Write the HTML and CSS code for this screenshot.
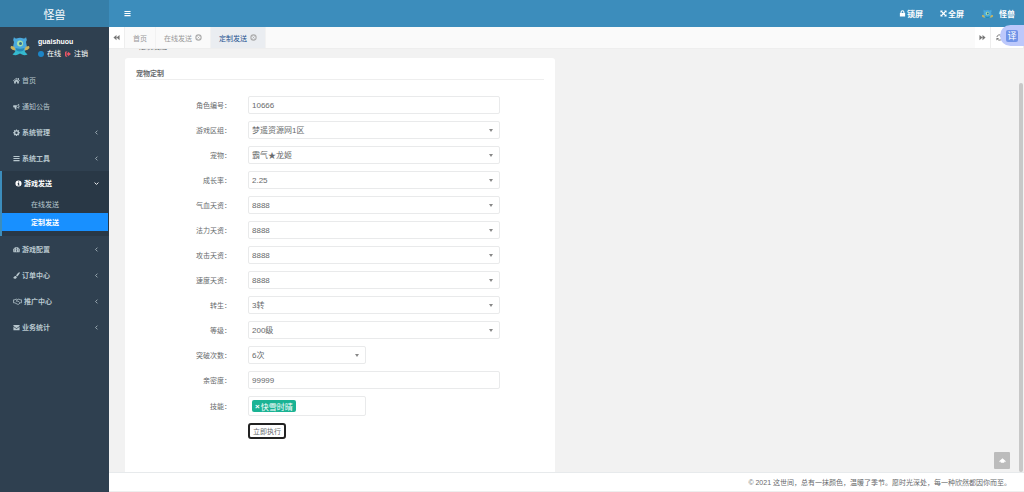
FILE: index.html
```html
<!DOCTYPE html>
<html lang="zh-CN">
<head>
    <meta charset="UTF-8">
    <meta name="viewport" content="width=device-width, initial-scale=1.0">
    <title>怪兽</title>
    <link rel="stylesheet" href="styles.css">
</head>
<body>

    <!-- Icons -->
    <svg class="sprite" aria-hidden="true">
        <symbol id="i-home" viewBox="0 0 16 16"><path d="M8 1.5 0 8.5l1 1.2L8 3.700l7 6 1-1.200-2.500-2.200V2h-2v2.500z"/><path d="M8 5 2.500 9.700V15H6.500v-4h3v4h4V9.700z"/></symbol>
        <symbol id="i-horn" viewBox="0 0 16 16"><path d="M1.500 5H7c3 0 5-2 7-3.500V6c1.500.3 1.500 2.700 0 3v4.500C12 12 10 10 7.500 9.900c-.6 1.800.2 3 1.200 4.100-1 1-3.200 1-4.200 0-.5-1.500-.9-2.600-.5-4H1.500C0 10 0 5 1.500 5zm7 1.300v2.400c1.500.3 2.800 1 4 1.900V4.400c-1.200.9-2.500 1.600-4 1.900z" fill-rule="evenodd"/></symbol>
        <symbol id="i-gear" viewBox="0 0 16 16"><path fill-rule="evenodd" d="M6.800 1h2.400l.4 2 1.300.5 1.700-1.100 1.700 1.700-1.100 1.700.5 1.300 2 .3v2.400l-2 .4-.5 1.300 1.100 1.700-1.700 1.700-1.700-1.100-1.300.5-.4 2H6.800l-.4-2-1.300-.5-1.700 1.100-1.700-1.700 1.100-1.700-.5-1.300-2-.4V7.400l2-.3.500-1.300-1.100-1.700 1.700-1.700 1.700 1.100L6.400 3zM8 5.600a2.800 2.800 0 1 0 0 5.600 2.800 2.800 0 0 0 0-5.600z"/></symbol>
        <symbol id="i-bars" viewBox="0 0 16 16"><path d="M1 2h14v2.500H1zM1 6.800h14v2.500H1zM1 11.500h14V14H1z"/></symbol>
        <symbol id="i-info" viewBox="0 0 16 16"><path fill-rule="evenodd" d="M8 1a7 7 0 1 0 0 14A7 7 0 0 0 8 1zM7 3.500h2.500v2H7zM6 7h3.500v4h1v1.500H6V11h1V8.500H6z"/></symbol>
        <symbol id="i-dash" viewBox="0 0 16 16"><path fill-rule="evenodd" d="M8 2a8 8 0 0 0-6.700 12h13.400A8 8 0 0 0 8 2zM7 4h2v2H7zM3 6h2v2H3zm8 0h2v2h-2zM1.700 10h2v2h-2zm10.600 0h2v2h-2zM8.500 7l1 .3-.6 3c1 1 .4 2.500-.9 2.500-1.600 0-2-2-.4-2.800z"/></symbol>
        <symbol id="i-brush" viewBox="0 0 16 16"><path d="M14 .8c1-.5 2 .4 1.600 1.500-1 2.500-3.600 5.800-6.200 8L7 7.900C9 5.200 11.800 2 14 .8zM6.200 8.900l2.500 2.400c.2 2.500-2 4-4.700 4-2 0-3.500-1.200-4-3.300 1 .7 1.800.7 2.300-.3.600-1.700 2-3.100 3.900-2.800z"/></symbol>
        <symbol id="i-shake" viewBox="0 0 20 16"><path d="M1 4h3l3-1.500 3 1 3-1L16 4h3v7h-2.500L12 14.500 9.500 14 4 11H1z" fill="none" stroke="currentColor" stroke-width="1.800"/><path d="M10 4 7 7c1 1.500 3 .8 4-.5l4.500 4.500" fill="none" stroke="currentColor" stroke-width="1.800"/></symbol>
        <symbol id="i-mail" viewBox="0 0 16 16"><path d="M1 2.500h14v2L8 9.500l-7-5zM1 6.500l7 5 7-5V14H1z"/></symbol>
        <symbol id="i-lock" viewBox="0 0 16 16"><path fill-rule="evenodd" d="M3.500 7V5a4.500 4.500 0 0 1 9 0v2h1.500v8H2V7zm2.500 0h4V5a2 2 0 0 0-4 0z"/></symbol>
        <symbol id="i-full" viewBox="0 0 16 16"><path d="M1 1h5.500L4.800 2.700 8 5.900l3.200-3.200L9.500 1H15v5.500l-1.700-1.700L10.100 8l3.200 3.200L15 9.500V15H9.500l1.700-1.700L8 10.100l-3.200 3.200L6.500 15H1V9.500l1.700 1.700L5.900 8 2.700 4.800 1 6.500z"/></symbol>
        <symbol id="i-back" viewBox="0 0 16 16"><path d="M8 2v12L1 8zM15 2v12L8 8z"/></symbol>
        <symbol id="i-close" viewBox="0 0 16 16"><circle cx="8" cy="8" r="6" fill="none" stroke="currentColor" stroke-width="2.500"/><path d="m5.500 5.500 5 5m0-5-5 5" stroke="currentColor" stroke-width="1.500"/></symbol>
        <symbol id="i-out" viewBox="0 0 16 16"><path d="M6 1H3Q0 1 0 4v8q0 3 3 3h3v-3H3V4h3zM8 2l8 6-8 6v-4H4V6h4z"/></symbol>
        <symbol id="i-refresh" viewBox="0 0 16 16"><path d="M2 7a6 6 0 0 1 10.500-3M14 9a6 6 0 0 1-10.500 3" fill="none" stroke="currentColor" stroke-width="2.200"/><path d="M15 1v6H9zM1 15V9h6z"/></symbol>
        <symbol id="i-left" viewBox="0 0 16 16"><path d="M11 2 5 8l6 6" fill="none" stroke="currentColor" stroke-width="2.500"/></symbol>
        <symbol id="i-down" viewBox="0 0 16 16"><path d="m2 5 6 6 6-6" fill="none" stroke="currentColor" stroke-width="3"/></symbol>
        <symbol id="i-up" viewBox="0 0 16 16"><path d="m1 9 7-6 7 6v3l-3-2v3H4v-3l-3 2z"/></symbol>
        <symbol id="i-monster" viewBox="0 0 40 40">
            <path d="M8 2q1 3 5 3 7-3 14 0 4 0 5-3 3 6 0 10 3 8 0 15-3 5-12 5T8 27q-3-7 0-15-3-4 0-10z" fill="#4aa9dd"/>
            <path d="M12 28h16l3 5 4 4q-6 3-11 0l-4-2-4 2q-5 3-11 0l4-4z" fill="#35b9cf"/>
            <path d="m2 20 6 1 3 5-1 3q-6-1-9-5zM38 20l-6 1-3 5 1 3q6-1 9-5z" fill="#c9b35d"/>
            <path d="M11 24q9 3 18 0-1 7-9 7t-9-7z" fill="#2589b5"/>
            <circle cx="20" cy="15" r="6" fill="#a9dfa6"/>
            <circle cx="21" cy="15" r="3" fill="#2b6f96"/>
        </symbol>
    </svg>

    <!-- Sidebar -->
    <aside class="sidebar">
        <a class="logo" href="#">怪兽</a>
        <div class="user-panel">
            <svg class="avatar"><use href="#i-monster"/></svg>
            <div class="user-info">
                <p class="user-name">guaishuou</p>
                <div class="user-links">
                    <a href="#"><i class="dot"></i>在线</a>
                    <a href="#"><svg class="icon icon-out"><use href="#i-out"/></svg>注销</a>
                </div>
            </div>
        </div>
        <nav class="menu">
            <a class="menu-item plain" href="#"><svg class="icon"><use href="#i-home"/></svg>首页</a>
            <a class="menu-item plain" href="#"><svg class="icon"><use href="#i-horn"/></svg>通知公告</a>
            <a class="menu-item" href="#"><svg class="icon"><use href="#i-gear"/></svg>系统管理<svg class="icon arrow"><use href="#i-left"/></svg></a>
            <a class="menu-item" href="#"><svg class="icon"><use href="#i-bars"/></svg>系统工具<svg class="icon arrow"><use href="#i-left"/></svg></a>
            <div class="menu-group">
                <a class="menu-item open" href="#"><svg class="icon"><use href="#i-info"/></svg>游戏发送<svg class="icon arrow"><use href="#i-down"/></svg></a>
                <a class="sub-item" href="#">在线发送</a>
                <a class="sub-item selected" href="#">定制发送</a>
            </div>
            <a class="menu-item" href="#"><svg class="icon"><use href="#i-dash"/></svg>游戏配置<svg class="icon arrow"><use href="#i-left"/></svg></a>
            <a class="menu-item" href="#"><svg class="icon"><use href="#i-brush"/></svg>订单中心<svg class="icon arrow"><use href="#i-left"/></svg></a>
            <a class="menu-item" href="#"><svg class="icon wide"><use href="#i-shake"/></svg>推广中心<svg class="icon arrow"><use href="#i-left"/></svg></a>
            <a class="menu-item" href="#"><svg class="icon"><use href="#i-mail"/></svg>业务统计<svg class="icon arrow"><use href="#i-left"/></svg></a>
        </nav>
    </aside>

    <!-- Main -->
    <div class="main">
        <header class="navbar">
            <button class="nav-toggle" aria-label="菜单"><svg class="icon"><use href="#i-bars"/></svg></button>
            <div class="nav-right">
                <a href="#"><svg class="icon"><use href="#i-lock"/></svg>锁屏</a>
                <a href="#"><svg class="icon"><use href="#i-full"/></svg>全屏</a>
                <a class="nav-user" href="#"><svg class="nav-avatar" viewBox="0 0 40 30"><use href="#i-monster" width="40" height="40"/></svg>怪兽</a>
            </div>
        </header>

        <div class="tabs">
            <button class="tab-btn" aria-label="向左"><svg class="icon"><use href="#i-back"/></svg></button>
            <a class="tab" href="#">首页</a>
            <a class="tab" href="#">在线发送<svg class="icon"><use href="#i-close"/></svg></a>
            <a class="tab active" href="#">定制发送<svg class="icon"><use href="#i-close"/></svg></a>
            <button class="tab-btn tab-next" aria-label="向右"><svg class="icon flip"><use href="#i-back"/></svg></button>
            <button class="tab-btn tab-refresh" aria-label="刷新"><svg class="icon"><use href="#i-refresh"/></svg></button>
        </div>

        <main class="content">
            <!-- Page heading, scrolled under the tabs -->
            <div class="page-heading">定制发送</div>
            <form class="card">
                <h4 class="card-title">宠物定制</h4>
                <div class="fields">
                    <div class="row"><label for="role">角色编号：</label><input class="control" id="role" type="text" value="10666"></div>
                    <div class="row"><label for="zone">游戏区组：</label><div class="select"><select class="control" id="zone"><option>梦遥资源网1区</option></select></div></div>
                    <div class="row"><label for="pet">宠物：</label><div class="select"><select class="control" id="pet"><option>霸气★龙姬</option></select></div></div>
                    <div class="row"><label for="grow">成长率：</label><div class="select"><select class="control" id="grow"><option>2.25</option></select></div></div>
                    <div class="row"><label for="hp">气血天资：</label><div class="select"><select class="control" id="hp"><option>8888</option></select></div></div>
                    <div class="row"><label for="mp">法力天资：</label><div class="select"><select class="control" id="mp"><option>8888</option></select></div></div>
                    <div class="row"><label for="atk">攻击天资：</label><div class="select"><select class="control" id="atk"><option>8888</option></select></div></div>
                    <div class="row"><label for="speed">速度天资：</label><div class="select"><select class="control" id="speed"><option>8888</option></select></div></div>
                    <div class="row"><label for="reborn">转生：</label><div class="select"><select class="control" id="reborn"><option>3转</option></select></div></div>
                    <div class="row"><label for="level">等级：</label><div class="select"><select class="control" id="level"><option>200级</option></select></div></div>
                    <div class="row"><label for="break">突破次数：</label><div class="select short"><select class="control" id="break"><option>6次</option></select></div></div>
                    <div class="row"><label for="close">亲密度：</label><input class="control" id="close" type="text" value="99999"></div>
                    <div class="row"><label for="skill">技能：</label><div class="tag-box short"><span class="tag"><button class="tag-x" type="button" aria-label="移除">×</button>快雪时晴</span><input class="tag-input" id="skill" type="text"></div></div>
                    <div class="row"><span></span><button class="submit" type="button">立即执行</button></div>
                </div>
            </form>
            <button class="to-top" aria-label="返回顶部"><svg class="icon"><use href="#i-up"/></svg></button>
            <div class="scroll-thumb"></div>
        </main>

        <footer class="footer">© 2021 这世间，总有一抹颜色，温暖了季节。愿时光深处，每一种欣然都因你而至。</footer>
    </div>

    <button class="translate"><span>译</span></button>

</body>
</html>
```

FILE: styles.css
```css
* {
    box-sizing: border-box;
}

body {
    margin: 0;
    display: flex;
    height: 100vh;
    overflow: hidden;
    position: relative;
    font-family: "Liberation Sans", "Noto Sans CJK SC", sans-serif;
    font-size: 7px;
    color: #676a6c;
    background-color: #f2f2f2;
}

a {
    color: inherit;
    text-decoration: none;
}

button,
input,
select {
    font-family: inherit;
    font-size: inherit;
    color: inherit;
    margin: 0;
    padding: 0;
    border: none;
    background: none;
}

.sprite {
    position: absolute;
    width: 0;
    height: 0;
}

.icon {
    width: 7px;
    height: 7px;
    fill: currentColor;
    flex: none;
}

/* Sidebar */
.sidebar {
    flex: none;
    width: 109px;
    background-color: #2f4050;
    color: #b8c7ce;
}

.logo {
    display: flex;
    height: 27px;
    align-items: center;
    justify-content: center;
    background-color: #367fa9;
    color: #fff;
    font-size: 11px;
}

.user-panel {
    display: flex;
    height: 40px;
    padding: 9px 10px 0;
    gap: 8px;
    color: #fff;
}

.avatar {
    width: 20px;
    height: 20px;
}

.user-name {
    margin: 0 0 1px;
    line-height: 11px;
    font-weight: bold;
}

.user-links {
    display: flex;
    gap: 4px;
    line-height: 11px;
}

.user-links a {
    display: flex;
    align-items: center;
    gap: 3px;
}

.dot {
    width: 6px;
    height: 6px;
    border-radius: 50%;
    background-color: #1c84c6;
}

.icon-out {
    width: 6px;
    height: 6px;
    color: #ed5565;
}

.menu-item {
    display: flex;
    align-items: center;
    height: 26px;
    padding: 0 10px 0 13px;
    gap: 2px;
    font-weight: bold;
}

.menu-item.plain {
    font-weight: normal;
}

.wide {
    width: 9px;
}

.arrow {
    width: 5px;
    height: 5px;
    margin-left: auto;
}

.menu-group {
    padding-bottom: 5px;
    border-left: 2px solid #3c8dbc;
    background-color: #293846;
}

.menu-item.open {
    height: 24px;
    color: #fff;
}

.sub-item {
    display: flex;
    align-items: center;
    height: 18px;
    margin-right: 1px;
    padding-left: 29px;
}

.sub-item.selected {
    background-color: #1890ff;
    color: #fff;
    font-weight: bold;
}

/* Navbar */
.main {
    flex: 1;
    min-width: 0;
    display: flex;
    flex-direction: column;
}

.navbar {
    flex: none;
    display: flex;
    align-items: center;
    justify-content: space-between;
    height: 27px;
    padding: 0 9px 0 15px;
    background-color: #3c8dbc;
    color: #fff;
}

.nav-toggle {
    display: flex;
}

.nav-right {
    display: flex;
    gap: 17px;
    font-size: 8px;
    font-weight: bold;
}

.nav-right a {
    display: flex;
    align-items: center;
    gap: 1px;
}

.nav-right .nav-user {
    gap: 5px;
}

.nav-avatar {
    width: 13px;
    height: 9px;
}

/* Tabs */
.tabs {
    flex: none;
    display: flex;
    height: 22px;
    background-color: #fafafa;
    border-bottom: 1px solid #eee;
    color: #999;
}

.tab-btn {
    display: flex;
    align-items: center;
    justify-content: center;
    width: 16px;
    background-color: #fff;
    border-right: 1px solid #eee;
    color: #777;
}

.tab {
    display: flex;
    align-items: center;
    gap: 3px;
    padding: 0 8px;
    border-right: 1px solid #f2f2f2;
}

.tab.active {
    background-color: #eaedf1;
    color: #23508e;
}

.tab .icon {
    color: #aaa;
}

.tab-next {
    margin-left: auto;
}

.tab-refresh {
    width: 33px;
    padding-right: 16px;
}

.flip {
    transform: scaleX(-1);
}

/* Content */
.content {
    flex: 1;
    min-height: 0;
    position: relative;
    display: flex;
    flex-direction: column;
    padding: 0 16px;
    overflow: hidden;
}

.page-heading {
    flex: none;
    height: 16px;
    margin-top: -7px;
    padding-left: 14px;
    line-height: 9px;
}

.card {
    flex: 1;
    min-height: 0;
    width: 48%;
    min-width: 430px;
    padding: 9px 11px 0;
    border-radius: 3px 3px 0 0;
    background-color: #fff;
}

.card-title {
    margin: 0;
    height: 13px;
    line-height: 13px;
    border-bottom: 1px solid #eee;
    font-size: 7px;
    font-weight: bold;
}

.fields {
    display: flex;
    flex-direction: column;
    gap: 7px;
    padding: 16px 44px 0 0;
}

.row {
    display: grid;
    grid-template-columns: 95px 1fr;
    column-gap: 17px;
    align-items: center;
}

.row label {
    text-align: right;
}

.control {
    display: block;
    width: 100%;
    height: 18px;
    padding: 0 3px;
    border: 1px solid #e9eaeb;
    border-radius: 2px;
    background-color: #fff;
    font-size: 8px;
    appearance: none;
}

.select {
    position: relative;
}

.select::after {
    content: "";
    position: absolute;
    right: 7px;
    top: 8px;
    border: 2px solid transparent;
    border-top: 3px solid #888;
    border-bottom: none;
}

.short {
    width: 118px;
}

.tag-box {
    display: flex;
    align-items: center;
    height: 20px;
    padding: 0 3px;
    border: 1px solid #e9eaeb;
    border-radius: 2px;
}

.tag {
    flex: none;
    display: flex;
    align-items: center;
    height: 12px;
    padding: 0 3px;
    gap: 1px;
    border-radius: 2px;
    background-color: #1ab394;
    color: #fff;
    font-size: 8px;
}

.tag-x {
    font-weight: bold;
}

.tag-input {
    flex: 1;
    min-width: 0;
    outline: none;
}

.submit {
    justify-self: start;
    height: 16px;
    padding: 0 3px;
    border: 2px solid #222;
    border-radius: 3px;
    background-color: #fff;
}

.to-top {
    position: absolute;
    right: 14px;
    bottom: 3px;
    display: flex;
    align-items: center;
    justify-content: center;
    width: 16px;
    height: 17px;
    border-radius: 1px;
    background-color: #bcbcbc;
    color: #fff;
}

.scroll-thumb {
    position: absolute;
    right: 1px;
    top: 8%;
    bottom: 0;
    width: 4px;
    border-radius: 2px;
    background-color: #c8c8c8;
}

/* Footer */
.footer {
    flex: none;
    height: 20px;
    padding-right: 13px;
    border-top: 1px solid #e7eaec;
    border-bottom: 1px solid #eee;
    background-color: #fff;
    line-height: 19px;
    text-align: right;
}

/* Translate button */
.translate {
    position: absolute;
    right: 0;
    top: 25px;
    display: flex;
    align-items: center;
    width: 24px;
    height: 21px;
    padding-left: 6px;
    border-radius: 11px 0 0 11px;
    background-color: #bcc8fb;
}

.translate span {
    width: 12px;
    height: 12px;
    border-radius: 2px;
    background-color: #7093e8;
    color: #fff;
    font-size: 9px;
    line-height: 12px;
}
```
